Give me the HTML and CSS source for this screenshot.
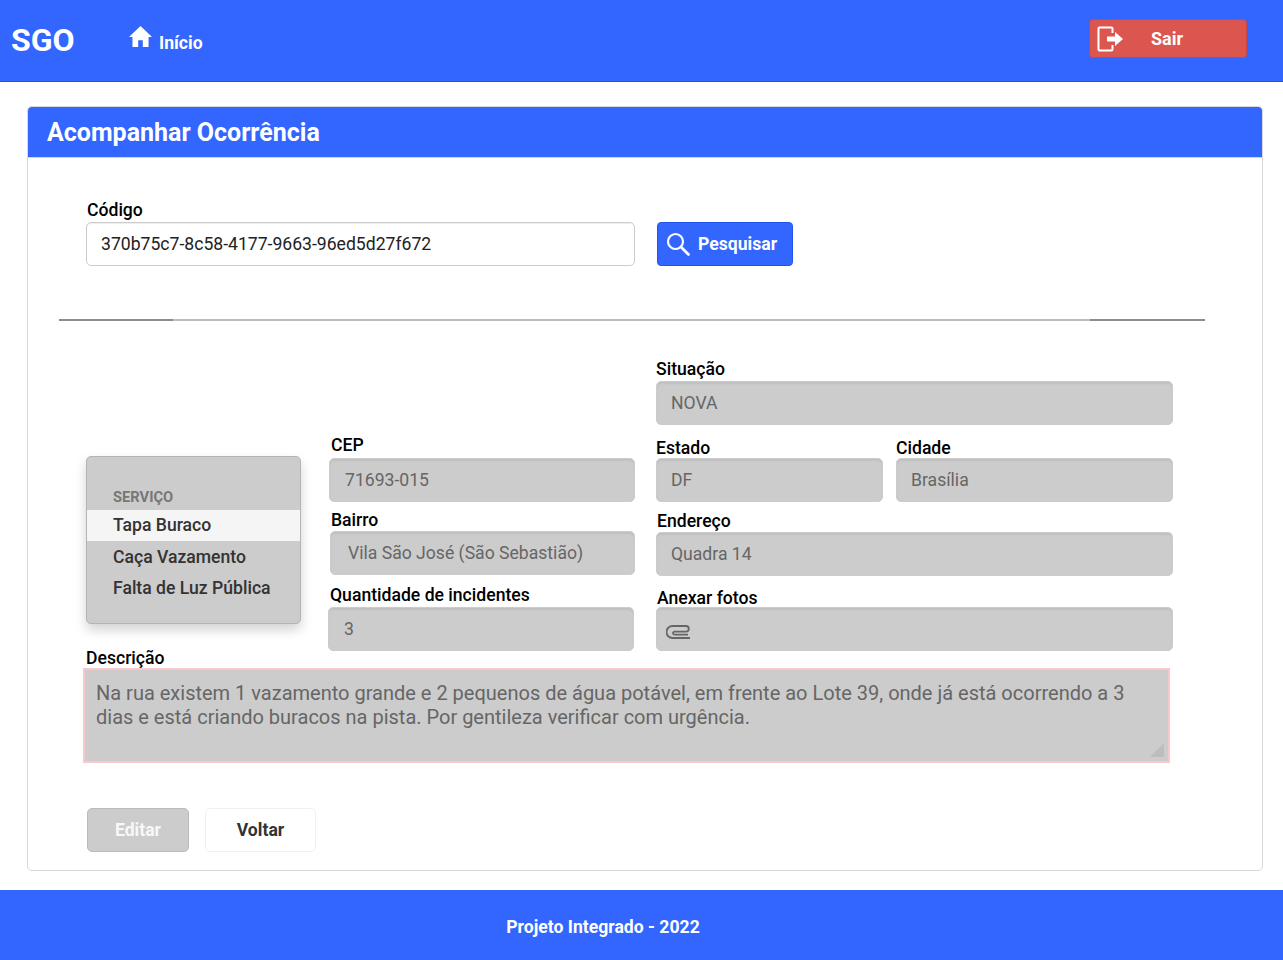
FILE: index.html
```html
<!DOCTYPE html>
<html lang="pt-BR">
<head>
  <meta charset="utf-8">
  <title>SGO - Acompanhar Ocorrência</title>
  <link rel="stylesheet" href="styles.css">
</head>
<body>
  <header class="topbar">
    <a class="brand" href="#">SGO</a>
    <a class="nav-link" href="#">
      <svg class="home-icon" viewBox="0 0 24 24"><path fill="#fff" d="M12 1 0 12.6h3.6V23h6v-7h4.800v7h6V12.600H24z"/></svg>
      <span>Início</span>
    </a>
    <a class="logout" href="#">
      <svg class="logout-icon" viewBox="0 0 26 26"><path fill="none" stroke="#fff" stroke-width="2" d="M15.500 7V2.500a1 1 0 0 0-1-1H2.500a1 1 0 0 0-1 1v21a1 1 0 0 0 1 1h12a1 1 0 0 0 1-1V19"/><path fill="#fff" d="M10 10.500h8V6l8 7-8 7v-4.500h-8z"/></svg>
      <span>Sair</span>
    </a>
  </header>

  <main class="card">
    <h1 class="card-title">Acompanhar Ocorrência</h1>
    <div class="card-body">
      <div class="search-row">
        <div class="field code-field">
          <label for="codigo">Código</label>
          <input class="input" id="codigo" type="text" value="370b75c7-8c58-4177-9663-96ed5d27f672">
        </div>
        <button class="btn-search" type="button">
          <svg class="search-icon" viewBox="0 0 24 24"><circle cx="9.500" cy="9.500" r="7.500" fill="none" stroke="#fff" stroke-width="2.200"/><path stroke="#fff" stroke-width="2.600" stroke-linecap="round" d="m15 15 7.500 7.500"/></svg>
          Pesquisar
        </button>
      </div>

      <hr class="divider">

      <div class="details">
        <div class="service-menu">
          <div class="menu-header">SERVIÇO</div>
          <div class="menu-item active">Tapa Buraco</div>
          <div class="menu-item">Caça Vazamento</div>
          <div class="menu-item">Falta de Luz Pública</div>
        </div>

        <div class="col-middle">
          <div class="field cep">
            <label for="cep">CEP</label>
            <input class="input locked" id="cep" type="text" value="71693-015" readonly>
          </div>
          <div class="field bairro">
            <label for="bairro">Bairro</label>
            <input class="input locked pad-wide" id="bairro" type="text" value="Vila São José (São Sebastião)" readonly>
          </div>
          <div class="field qtd">
            <label for="qtd">Quantidade de incidentes</label>
            <input class="input locked" id="qtd" type="text" value="3" readonly>
          </div>
        </div>

        <div class="col-right">
          <div class="field situacao">
            <label for="situacao">Situação</label>
            <input class="input locked" id="situacao" type="text" value="NOVA" readonly>
          </div>
          <div class="pair">
            <div class="field estado">
              <label for="estado">Estado</label>
              <input class="input locked" id="estado" type="text" value="DF" readonly>
            </div>
            <div class="field cidade">
              <label for="cidade">Cidade</label>
              <input class="input locked" id="cidade" type="text" value="Brasília" readonly>
            </div>
          </div>
          <div class="field endereco">
            <label for="endereco">Endereço</label>
            <input class="input locked" id="endereco" type="text" value="Quadra 14" readonly>
          </div>
          <div class="field anexo">
            <label>Anexar fotos</label>
            <div class="input locked file-box">
              <svg class="clip-icon" viewBox="0 0 26 14"><path fill="none" stroke="#666" stroke-width="1.800" d="M24 13H6.500a6 6 0 0 1 0-12H20a2.800 2.800 0 0 1 0 5.600H8.500a1.500 1.500 0 0 0 0 3H22"/></svg>
            </div>
          </div>
        </div>
      </div>

      <div class="descricao">
        <label for="descricao">Descrição</label>
        <div class="desc-wrap">
          <textarea class="desc-text" id="descricao" readonly>Na rua existem 1 vazamento grande e 2 pequenos de água potável, em frente ao Lote 39, onde já está ocorrendo a 3 dias e está criando buracos na pista. Por gentileza verificar com urgência.</textarea>
        </div>
      </div>

      <div class="actions">
        <button class="btn-edit" type="button">Editar</button>
        <button class="btn-back" type="button">Voltar</button>
      </div>
    </div>
  </main>

  <footer class="footer">Projeto Integrado - 2022</footer>
</body>
</html>
```

FILE: styles.css
```css
* {
  box-sizing: border-box;
}

body {
  margin: 0;
  background: #fff;
  font-family: Roboto, "Liberation Sans", sans-serif;
  color: #000;
}

/* top bar */
.topbar {
  display: flex;
  align-items: center;
  height: 82px;
  padding-left: 11px;
  background: #3366ff;
  border-bottom: 1px solid #1f55ee;
}

.brand {
  width: 117px;
  margin-top: -1px;
  color: #fff;
  font-size: 32px;
  font-weight: 700;
  text-decoration: none;
}

.nav-link {
  display: flex;
  align-items: flex-start;
  gap: 6px;
  margin-top: -4px;
  color: #fff;
  font-size: 17.6px;
  font-weight: 700;
  text-decoration: none;
}

.nav-link span {
  margin-top: 8px;
}

.home-icon {
  width: 25px;
  height: 23px;
}

.logout {
  display: flex;
  align-items: center;
  width: 158px;
  height: 39px;
  margin: -4px 36px 0 auto;
  padding-left: 7px;
  background: #dc5650;
  border: 1px solid #d0443e;
  border-radius: 4px;
  color: #fff;
  font-size: 18px;
  font-weight: 700;
  text-decoration: none;
}

.logout-icon {
  width: 26px;
  height: 26px;
}

.logout span {
  margin-left: 28px;
}

/* card */
.card {
  width: 1236px;
  height: 765px;
  margin: 24px 0 19px 27px;
  border: 1px solid #d8d8d8;
  border-radius: 5px;
  overflow: hidden;
}

.card-title {
  height: 51px;
  margin: 0;
  padding: 11px 19px 0;
  background: #3366ff;
  border-bottom: 1px solid #c9d6f5;
  color: #fff;
  font-size: 25px;
  font-weight: 700;
  line-height: 30px;
}

.card-body {
  padding: 0 0 0 31px;
}

.search-row {
  display: flex;
  align-items: flex-end;
  gap: 22px;
  margin-top: 41px;
  padding-left: 27px;
}

.field {
  display: flex;
  flex-direction: column;
}

.field label {
  height: 21px;
  padding-top: 1px;
  font-size: 17.6px;
  font-weight: 500;
  line-height: 21px;
}

.code-field {
  width: 549px;
}

.code-field label {
  padding-left: 1px;
}

.input {
  width: 100%;
  height: 44px;
  margin: 0;
  padding: 0 15px;
  border: 1px solid #ccc;
  border-radius: 5px;
  background: #fff;
  box-shadow: inset 0 1px 1px rgba(0, 0, 0, 0.075);
  color: #222;
  font-family: inherit;
  font-size: 17.6px;
  outline: none;
}

.code-field .input {
  margin-top: 2px;
  padding: 0 14px;
}

.locked {
  background: #ccc;
  box-shadow: inset 0 2px 2px rgba(0, 0, 0, 0.06);
  color: #666;
}

.btn-search {
  display: flex;
  align-items: center;
  gap: 8px;
  width: 136px;
  height: 44px;
  padding: 0 0 0 8px;
  background: #3366ff;
  border: 1px solid #1f55ee;
  border-radius: 4px;
  color: #fff;
  font-family: inherit;
  font-size: 17.6px;
  font-weight: 700;
}

.search-icon {
  width: 24px;
  height: 24px;
}

.divider {
  width: 1146px;
  height: 2px;
  margin: 53px 0 0;
  border: 0;
  background: linear-gradient(to right, #8c8c8c 114px, #bbb 114px, #bbb 1031px, #8c8c8c 1031px);
}

/* details */
.details {
  display: flex;
  align-items: flex-end;
  height: 330px;
  padding-left: 27px;
}

.service-menu {
  width: 215px;
  height: 168px;
  margin-bottom: 27px;
  padding-top: 31px;
  background: #ccc;
  border: 1px solid #b4b4b4;
  border-radius: 5px;
  box-shadow: 0 6px 12px rgba(0, 0, 0, 0.175);
}

.menu-header {
  padding-left: 26px;
  color: #777;
  font-size: 14.7px;
  font-weight: 700;
  line-height: 18px;
}

.menu-item {
  height: 31px;
  padding-left: 26px;
  color: #333;
  font-size: 17.6px;
  font-weight: 500;
  line-height: 30px;
}

.menu-item.active {
  margin-top: 4px;
  margin-bottom: 1px;
  background: #f5f5f5;
}

.col-middle {
  display: flex;
  flex-direction: column;
  width: 307px;
  margin-left: 27px;
}

.cep {
  margin-left: 1px;
}

.field.cep label {
  padding-left: 2px;
}

.cep .input {
  margin-top: 3px;
  width: 306px;
}

.bairro {
  margin: 7px 0 0 2px;
}

.field.bairro label {
  padding-left: 1px;
}

.bairro .input {
  margin-top: 1px;
  width: 305px;
}

.input.pad-wide {
  padding-left: 17px;
}

.qtd {
  margin: 9px 0 0 0;
}

.field.qtd label {
  padding-left: 2px;
}

.qtd .input {
  margin-top: 2px;
  width: 306px;
}

.col-right {
  display: flex;
  flex-direction: column;
  width: 517px;
  margin-left: 21px;
}

.col-right .input {
  padding-left: 14px;
}

.situacao .input {
  margin-top: 2px;
}

.pair {
  display: flex;
  gap: 13px;
  margin-top: 11px;
}

.estado {
  width: 227px;
}

.cidade {
  flex: 1;
}

.pair .field label {
  padding-top: 2px;
}

.pair .input {
  margin-top: 1px;
}

.endereco {
  margin-top: 7px;
}

.endereco .input {
  margin-top: 2px;
}

.field.endereco label {
  padding: 2px 0 0 1px;
}

.field.anexo label {
  padding: 2px 0 0 1px;
}

.anexo {
  margin-top: 10px;
}

.col-right .file-box {
  display: flex;
  align-items: center;
  padding: 6px 0 0 9px;
}

.clip-icon {
  width: 26px;
  height: 14px;
}

/* description */
.descricao {
  margin-top: -5px;
  padding-left: 24px;
}

.descricao label {
  display: block;
  height: 21px;
  padding: 2px 0 0 3px;
  font-size: 17.6px;
  font-weight: 500;
  line-height: 21px;
}

.desc-wrap {
  position: relative;
  width: 1087px;
  margin-top: 1px;
}

.desc-wrap::after {
  content: "";
  position: absolute;
  right: 6px;
  bottom: 6px;
  width: 14px;
  height: 14px;
  background: #bdbdbd;
  clip-path: polygon(100% 0, 100% 100%, 0 100%);
}

.desc-text {
  display: block;
  width: 100%;
  height: 95px;
  margin: 0;
  padding: 11px;
  background: #ccc;
  border: 2px solid #f8c9cc;
  color: #666;
  font-family: inherit;
  font-size: 20px;
  line-height: 24px;
  outline: none;
  resize: none;
}

.actions {
  display: flex;
  gap: 16px;
  margin-top: 45px;
  padding-left: 28px;
}

.btn-edit,
.btn-back {
  height: 44px;
  border-radius: 5px;
  font-family: inherit;
  font-size: 17.6px;
  font-weight: 700;
}

.btn-edit {
  width: 102px;
  background: #ccc;
  border: 1px solid #bbb;
  color: #f8f8f8;
}

.btn-back {
  width: 111px;
  background: #fff;
  border: 1px solid #f0f0f0;
  color: #333;
}

.footer {
  height: 70px;
  padding-right: 77px;
  background: #3366ff;
  color: #fff;
  font-size: 17.6px;
  font-weight: 700;
  line-height: 74px;
  text-align: center;
}
```
